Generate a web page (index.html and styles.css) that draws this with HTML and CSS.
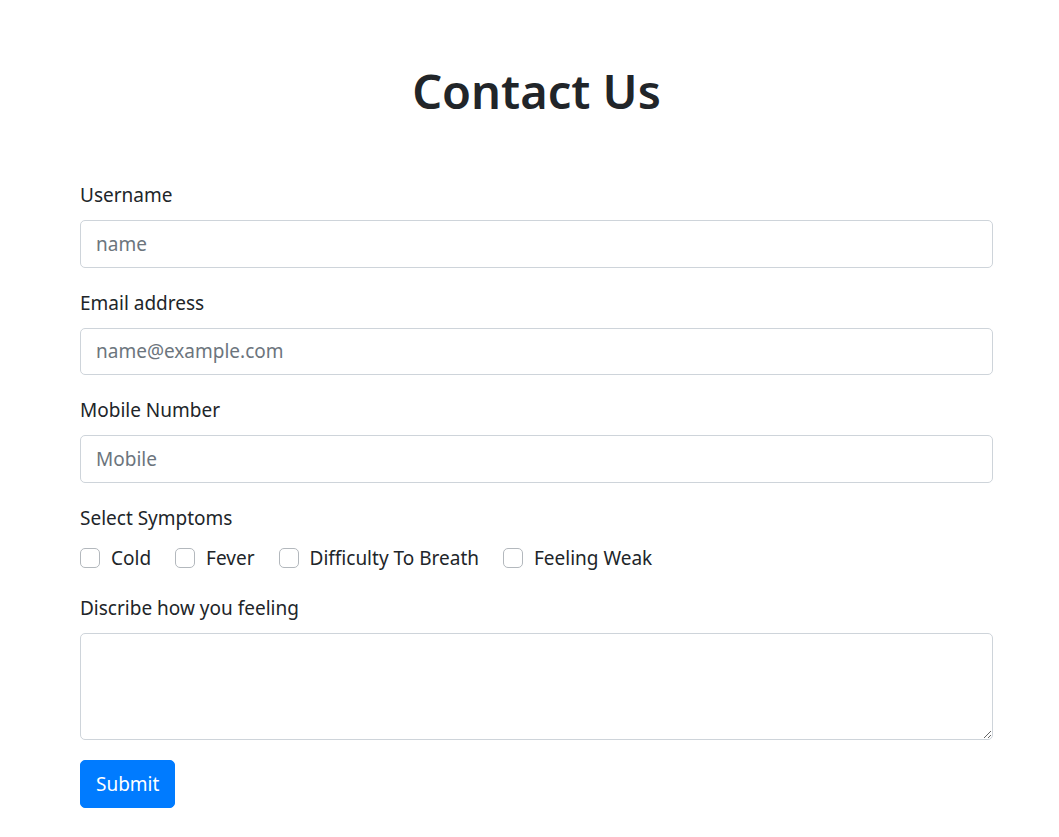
FILE: index.html
```html
<!DOCTYPE html>
<html lang="en">
<head>
<meta charset="utf-8">
<title>Contact Us</title>
<link rel="stylesheet" href="styles.css">
</head>
<body>
<main class="page">
  <h1 class="title">Contact Us</h1>
  <form class="form">
    <div class="group">
      <label class="label" for="username">Username</label>
      <input class="control" id="username" type="text" placeholder="name">
    </div>
    <div class="group">
      <label class="label" for="email">Email address</label>
      <input class="control" id="email" type="email" placeholder="name@example.com">
    </div>
    <div class="group">
      <label class="label" for="mobile">Mobile Number</label>
      <input class="control" id="mobile" type="text" placeholder="Mobile">
    </div>
    <div class="group">
      <div class="label">Select Symptoms</div>
      <div class="checks">
        <label class="check"><input class="box" type="checkbox"><span>Cold</span></label>
        <label class="check"><input class="box" type="checkbox"><span>Fever</span></label>
        <label class="check"><input class="box" type="checkbox"><span>Difficulty To Breath</span></label>
        <label class="check"><input class="box" type="checkbox"><span>Feeling Weak</span></label>
      </div>
    </div>
    <div class="group">
      <label class="label" for="feeling">Discribe how you feeling</label>
      <textarea class="control area" id="feeling" rows="3"></textarea>
    </div>
    <button class="submit" type="submit">Submit</button>
  </form>
</main>
</body>
</html>
```

FILE: styles.css
```css
* { box-sizing: border-box; }
html, body { margin: 0; padding: 0; background: #fff; }
body {
  font-family: "Noto Sans", "Open Sans", "Liberation Sans", sans-serif;
  font-size: 20px;
  line-height: 30px;
  color: #212529;
}
.page {
  width: 913px;
  margin-left: 80px;
}
.title {
  margin: 61px 0 59px;
  font-size: 47px;
  line-height: 60px;
  font-weight: 600;
  text-align: center;
}
.form { display: flex; flex-direction: column; }
.group { display: flex; flex-direction: column; margin-bottom: 20px; }
.label { display: block; margin-bottom: 10px; font-size: 19px; line-height: 30px; }
.control {
  display: block;
  width: 100%;
  height: 47.5px;
  padding: 7.5px 15px;
  font: inherit;
  font-size: 19px;
  line-height: 30px;
  color: #495057;
  background: #fff;
  border: 1.25px solid #ced4da;
  border-radius: 5px;
  outline: none;
}
.control::placeholder { color: #6c757d; opacity: 1; }
.area { height: 107.5px; resize: vertical; }
.checks { display: flex; align-items: center; height: 30px; }
.check {
  display: flex;
  align-items: center;
  margin-right: 24px;
  font-size: 19px;
}
.box {
  appearance: none;
  -webkit-appearance: none;
  width: 20px;
  height: 20px;
  margin: 0 11px 0 0;
  border: 1.25px solid #b3b8bd;
  border-radius: 5px;
  background: #fff;
}
.submit {
  align-self: flex-start;
  height: 47.5px;
  padding: 7.5px 15px;
  font: inherit;
  font-size: 19px;
  line-height: 30px;
  color: #fff;
  background: #007bff;
  border: 1.25px solid #007bff;
  border-radius: 5px;
}
```
